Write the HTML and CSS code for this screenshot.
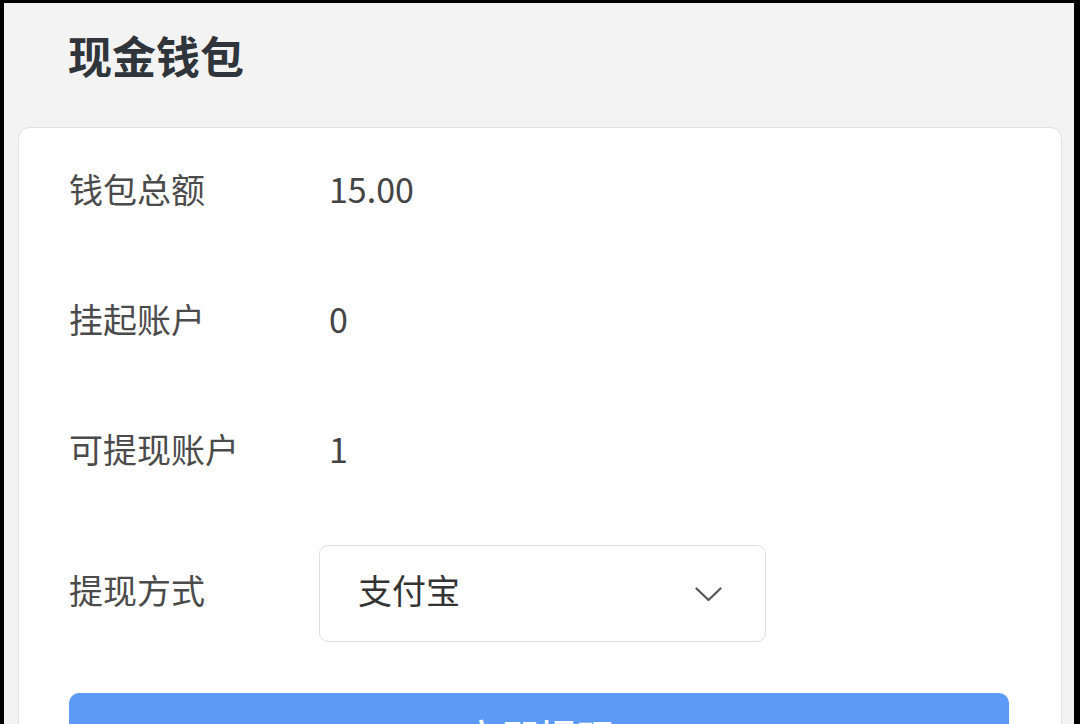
FILE: index.html
```html
<!DOCTYPE html>
<html lang="zh-CN">
<head>
<meta charset="utf-8">
<title>现金钱包</title>
<link rel="stylesheet" href="styles.css">
</head>
<body>
<div class="screen">
  <header class="header">现金钱包</header>
  <section class="card">
    <div class="row">
      <div class="label">钱包总额</div>
      <div class="value">15.00</div>
    </div>
    <div class="row">
      <div class="label">挂起账户</div>
      <div class="value">0</div>
    </div>
    <div class="row">
      <div class="label">可提现账户</div>
      <div class="value">1</div>
    </div>
    <div class="row row-select">
      <div class="label">提现方式</div>
      <div class="select">
        <span class="select-text">支付宝</span>
        <svg class="chevron" width="27" height="15" viewBox="0 0 27 15" aria-hidden="true">
          <path d="M1.5 1.5 L13.5 13 L25.5 1.5" fill="none" stroke="#555" stroke-width="2.2" stroke-linecap="round" stroke-linejoin="round"/>
        </svg>
      </div>
    </div>
    <button class="btn" type="button">立即提现</button>
  </section>
</div>
</body>
</html>
```

FILE: styles.css
```css
html, body {
  margin: 0;
  padding: 0;
  height: 100%;
  background: #000;
  overflow: hidden;
}
body {
  font-family: "Noto Sans CJK SC", "Noto Sans", sans-serif;
}
.screen {
  margin: 3px 6px 0 4px;
  height: 721px;
  background: #f3f3f3;
  padding: 0 0 0 14px;
  box-sizing: border-box;
  overflow: hidden;
}
.header {
  height: 124px;
  display: flex;
  align-items: center;
  padding-left: 50px;
  padding-bottom: 20px;
  box-sizing: border-box;
  font-size: 44px;
  font-weight: 700;
  color: #2f353b;
}
.card {
  width: 1044px;
  box-sizing: border-box;
  background: #fff;
  border: 1.5px solid #e1e1e1;
  border-radius: 12px;
  padding: 0 0 0 50px;
  height: 700px;
}
.row {
  height: 130px;
  display: flex;
  align-items: center;
  font-size: 34px;
  padding-bottom: 10px;
  box-sizing: border-box;
}
.label {
  width: 260px;
  flex: none;
  color: #4b4b4b;
}
.value {
  color: #444;
  font-size: 34px;
}
.row-select {
  height: auto;
  margin-top: 27px;
  padding-bottom: 0;
}
.row-select .label {
  width: 250px;
  padding-bottom: 9px;
}
.select {
  width: 447px;
  height: 97px;
  box-sizing: border-box;
  border: 1.5px solid #e0e0e0;
  border-radius: 9px;
  display: flex;
  align-items: center;
  justify-content: space-between;
  padding: 0 43px 8px 38px;
  color: #333;
  font-size: 34px;
}
.chevron {
  display: block;
  margin-top: 10px;
}
.btn {
  display: block;
  margin-top: 51px;
  width: 940px;
  height: 96px;
  border: none;
  border-radius: 10px;
  background: #5b9bf5;
  color: #fff;
  font-family: "Noto Sans CJK SC", "Noto Sans", sans-serif;
  font-size: 38px;
  font-weight: 500;
  padding: 0 0 12px 0;
}
```
